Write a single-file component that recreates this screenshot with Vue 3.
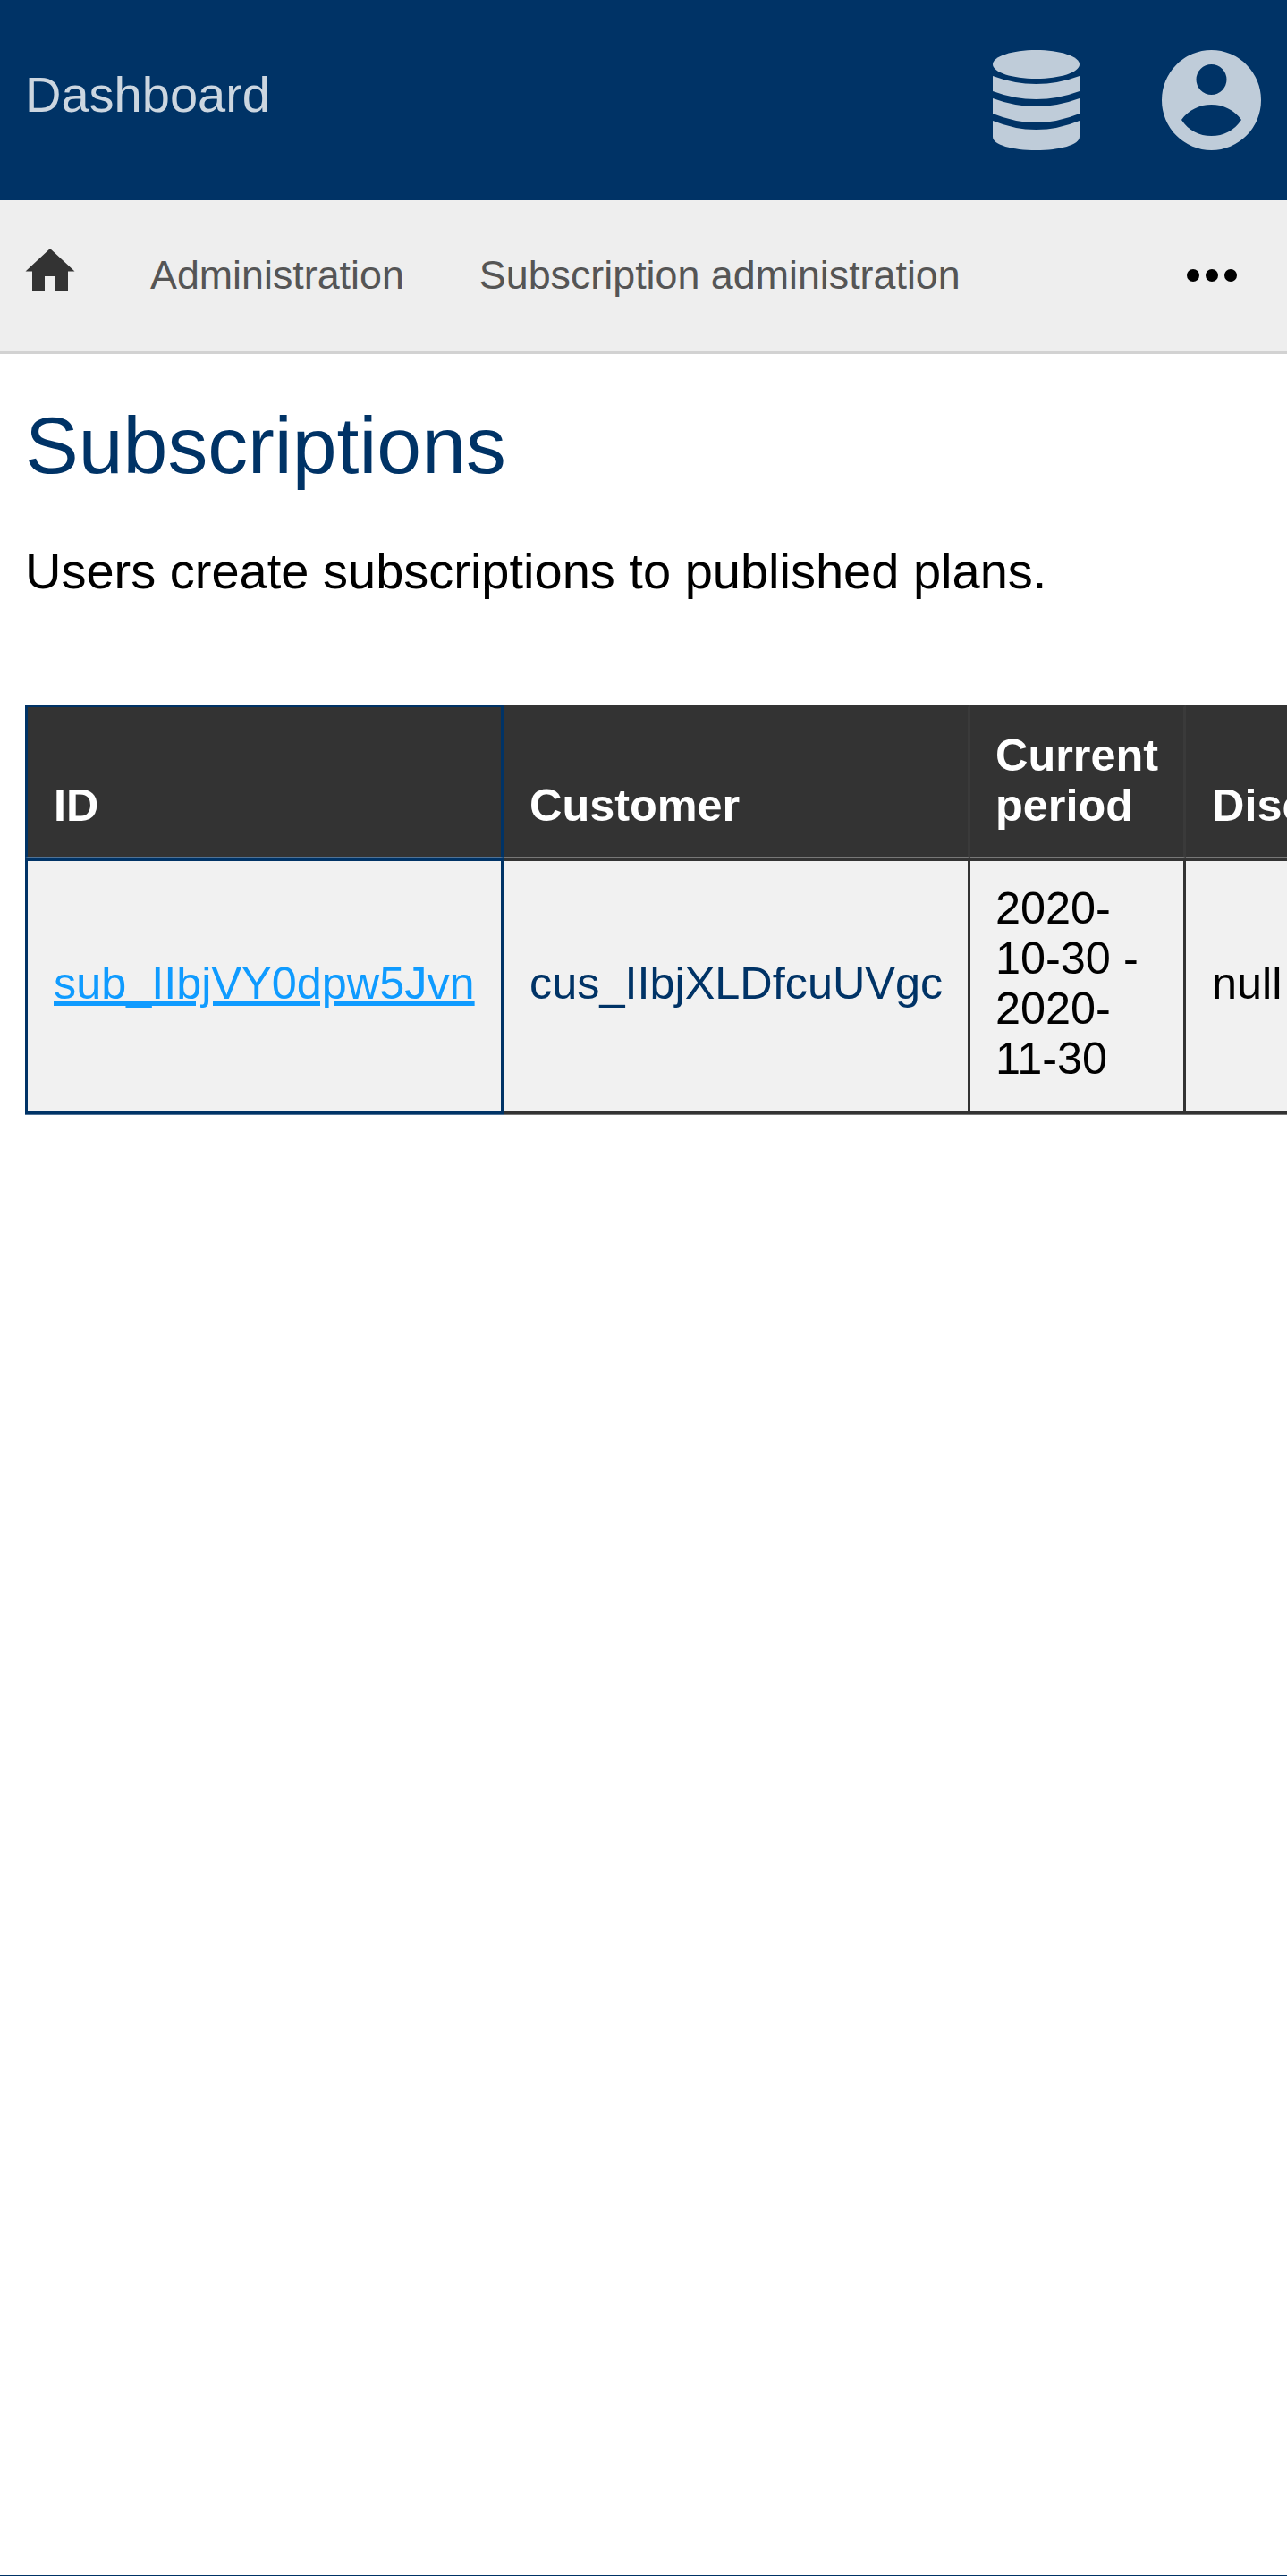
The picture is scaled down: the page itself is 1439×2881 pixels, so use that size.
<template>
  <div class="page">
    <header class="topbar">
      <a class="brand">Dashboard</a>
      <div class="topbar-icons">
        <svg class="db-icon" viewBox="0 0 97 112">
          <path d="M0 16 C0 7 22 0 48.5 0 C75 0 97 7 97 16 C97 25 75 32 48.5 32 C22 32 0 25 0 16 Z" />
          <path d="M0 29 Q48.5 47 97 29 V46 Q48.5 64 0 46 Z" />
          <path d="M0 54 Q48.5 72 97 54 V71 Q48.5 91 0 71 Z" />
          <path d="M0 79 Q48.5 99 97 79 V97 C97 106 75 112 48.5 112 C22 112 0 106 0 97 Z" />
        </svg>
        <svg class="user-icon" viewBox="0 0 111 112">
          <path
            fill-rule="evenodd"
            d="M55.5 0 A55.5 56 0 1 1 55.5 112 A55.5 56 0 1 1 55.5 0 Z M55.5 16 A17 17 0 1 0 55.5 50 A17 17 0 1 0 55.5 16 Z M22 78 C30 67 42 61 55.5 61 C69 61 81 67 89 78 C81 90 69 96 55.5 96 C42 96 30 90 22 78 Z"
          />
        </svg>
      </div>
    </header>

    <nav class="crumbs">
      <svg class="home-icon" viewBox="0 0 56 48">
        <path d="M28 0 L55.5 25.5 H48 V48 H34 V31 H22 V48 H8 V25.5 H0.5 Z" />
      </svg>
      <a v-for="link in links" :key="link" class="crumb">{{ link }}</a>
      <span class="more"><i></i><i></i><i></i></span>
    </nav>

    <main class="content">
      <h1>Subscriptions</h1>
      <p>Users create subscriptions to published plans.</p>
      <div class="table-wrap">
        <table>
          <thead>
            <tr>
              <th class="col-id">ID</th>
              <th class="col-customer">Customer</th>
              <th class="col-period">Current period</th>
              <th class="col-discount">Discount</th>
            </tr>
          </thead>
          <tbody>
            <tr>
              <td class="col-id"><a href="#">sub_IIbjVY0dpw5Jvn</a></td>
              <td class="customer">cus_IIbjXLDfcuUVgc</td>
              <td class="period">2020-10-30 - 2020-11-30</td>
              <td>null</td>
            </tr>
          </tbody>
        </table>
      </div>
    </main>

    <footer class="bottom-line"></footer>
  </div>
</template>

<script setup>
const links = ["Administration", "Subscription administration"];
</script>

<style>
body {
  font-family: "Liberation Sans", Arial, sans-serif;
}
</style>

<style scoped>
.page {
  min-height: 2881px;
  display: flex;
  flex-direction: column;
  overflow: hidden;
  background: #fff;
}

.topbar {
  height: 224px;
  background: #003366;
  display: flex;
  align-items: center;
  justify-content: space-between;
  padding: 0 29px 0 28px;
}

.brand {
  font-size: 56px;
  color: #ccd6e0;
  margin-bottom: 13px;
}

.topbar-icons {
  display: flex;
  align-items: center;
  gap: 92px;
}

.db-icon,
.user-icon {
  height: 112px;
  fill: #bfccd9;
  display: block;
}

.db-icon {
  width: 97px;
}

.user-icon {
  width: 111px;
}

.crumbs {
  height: 168px;
  background: #eee;
  border-bottom: 4px solid #d2d2d2;
  display: flex;
  align-items: center;
  padding: 0 56px 0 28px;
}

.home-icon {
  width: 56px;
  height: 48px;
  fill: #333;
  margin-right: 84px;
  margin-bottom: 12px;
}

.crumb {
  font-size: 44.8px;
  color: #555;
  margin-right: 84px;
  margin-bottom: 2px;
}

.more {
  margin-left: auto;
  display: flex;
  gap: 7px;
}

.more i {
  width: 14px;
  height: 14px;
  border-radius: 50%;
  background: #000;
}

.content {
  padding: 0 0 0 28px;
}

h1 {
  margin: 52px 0 0;
  font-size: 89.6px;
  font-weight: 400;
  line-height: 100px;
  color: #003366;
}

p {
  margin: 59px 0 0;
  font-size: 56px;
  line-height: 64px;
  color: #000;
}

.table-wrap {
  margin-top: 117px;
  padding-bottom: 1px;
  overflow: hidden;
}

table {
  border-collapse: separate;
  border-spacing: 0;
  table-layout: fixed;
  width: 1700px;
  font-size: 50.4px;
  line-height: 56px;
}

th,
td {
  box-sizing: border-box;
  padding-left: 29px;
  padding-right: 26px;
}

th {
  background: #333;
  color: #fff;
  text-align: left;
  vertical-align: bottom;
  font-weight: 700;
  padding-top: 26px;
  padding-bottom: 30px;
  border-top: 3px solid #333;
  border-right: 3px solid #3a3a3a;
  border-bottom: 1px solid #777;
}

td {
  background: #f1f1f1;
  color: #000;
  padding-top: 25px;
  padding-bottom: 31px;
  border-top: 3px solid #333;
  border-right: 3px solid #333;
  border-bottom: 3px solid #333;
  box-shadow: 0 1px 0 #777;
}

.col-id {
  width: 536px;
  border-left: 3px solid #003366;
  border-top: 3px solid #003366;
  border-right: 4px solid #003366;
}

td.col-id {
  border-bottom: 3px solid #003366;
  box-shadow: 0 1px 0 #4f7296;
}

th.col-id {
  border-bottom: 1px solid #4f7296;
}

.col-customer,
.customer,
.col-period,
.period {
  padding-left: 28px;
}

.col-customer {
  width: 521px;
}

.col-period {
  width: 241px;
}

.col-discount {
  width: 402px;
}

.customer {
  color: #003366;
}

td a {
  color: #0f9bff;
  text-decoration: underline;
}

.bottom-line {
  margin-top: auto;
  height: 1px;
  background: #003366;
}
</style>
